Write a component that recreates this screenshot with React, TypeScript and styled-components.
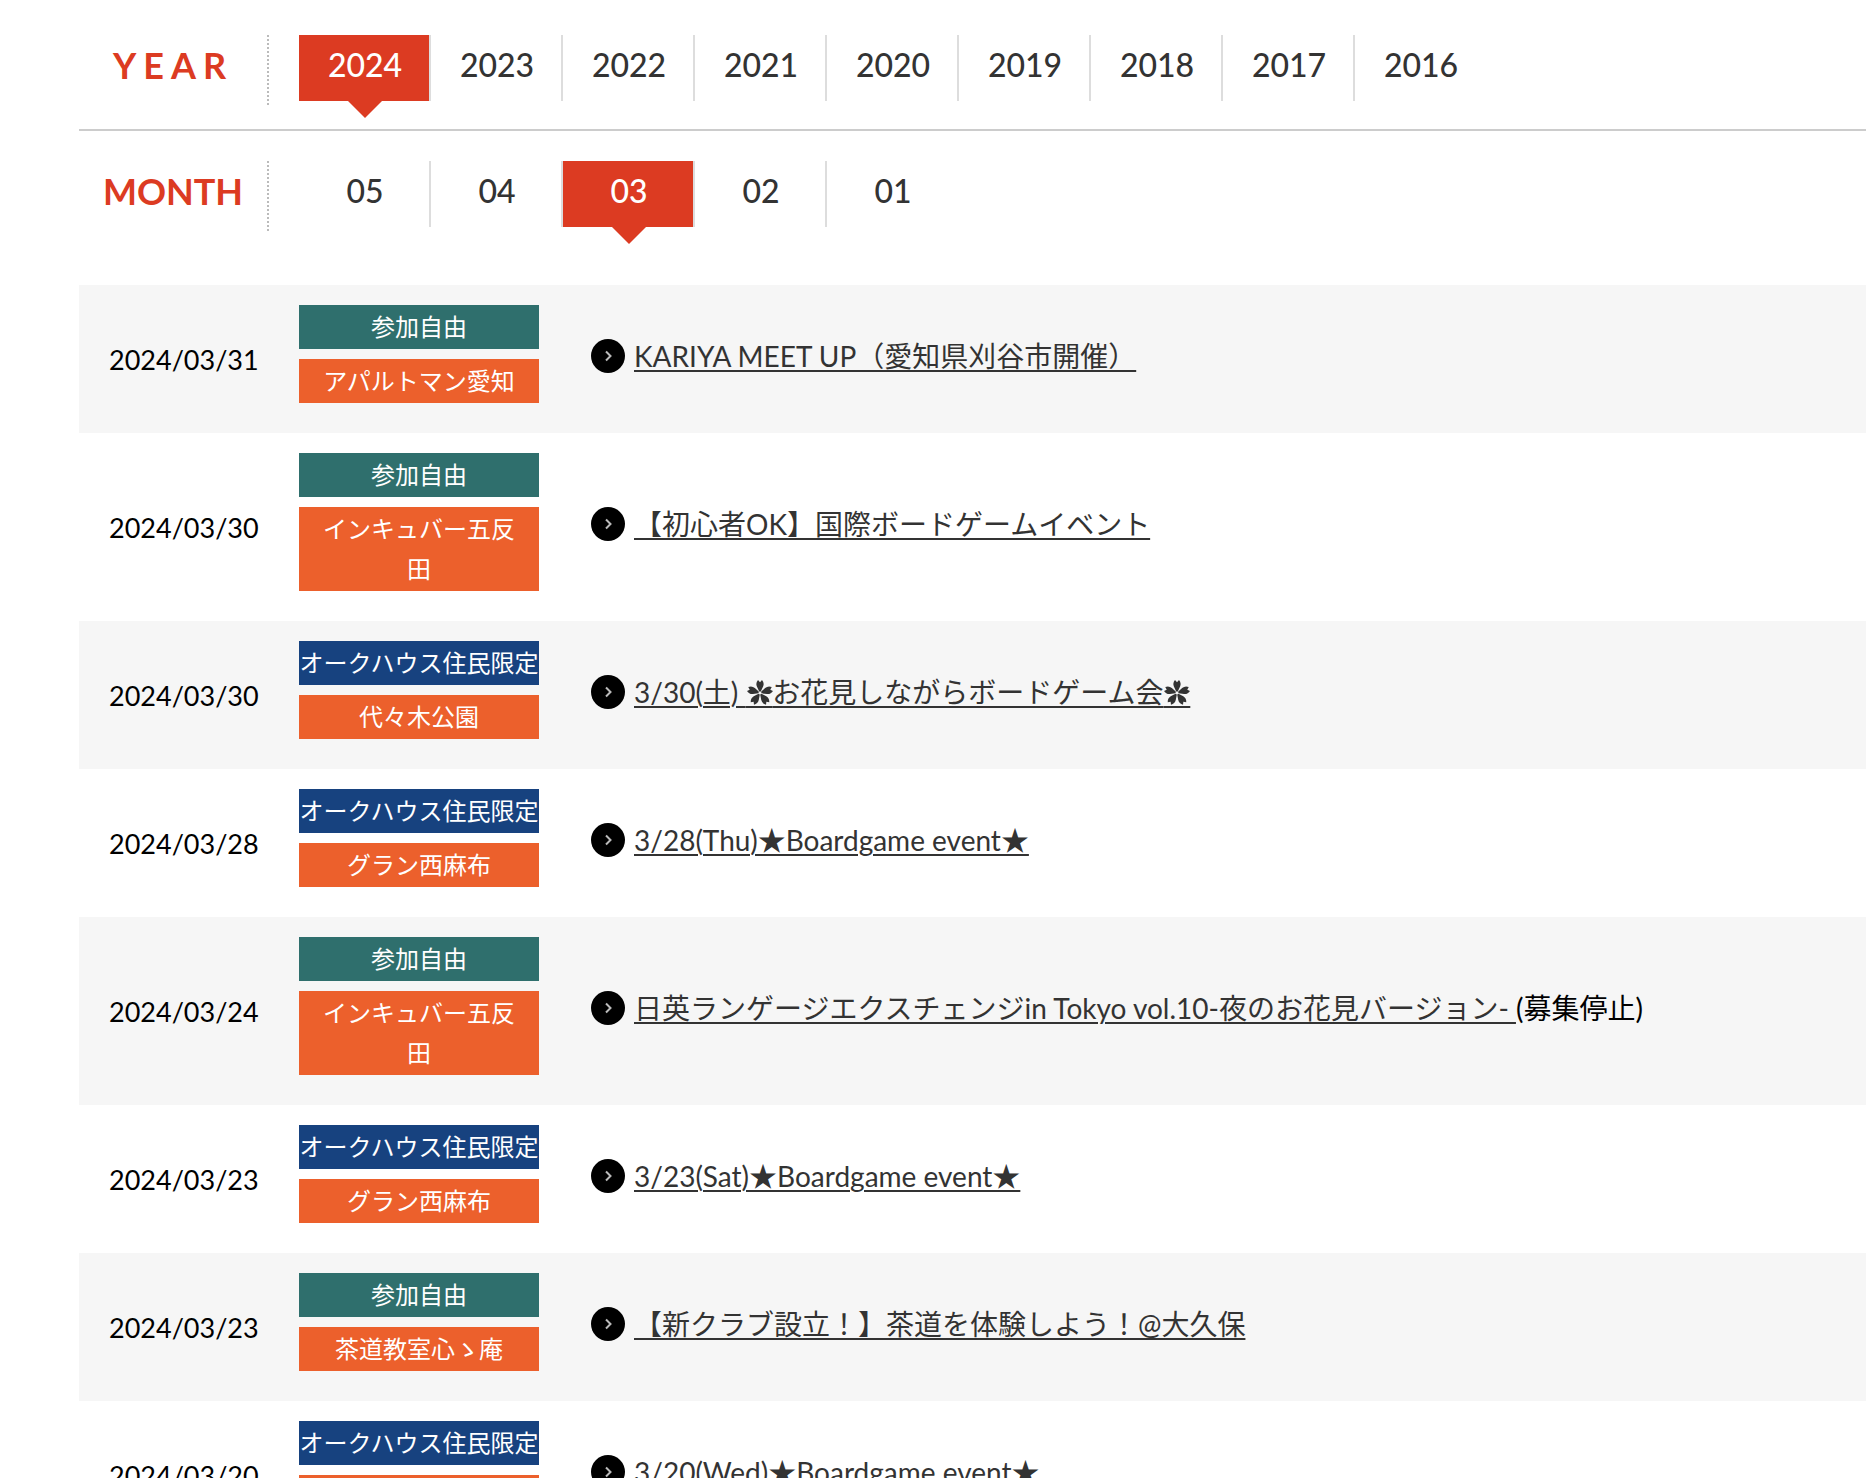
import React from "react";
import styled, { createGlobalStyle, css } from "styled-components";

const GlobalStyle = createGlobalStyle`
  *, *::before, *::after { box-sizing: border-box; }
  body {
    margin: 0;
    background: #fff;
    color: #000;
    font-family: Lato, "Noto Sans CJK JP", "DejaVu Sans", sans-serif;
    font-size: 28px;
    line-height: 40px;
    overflow-x: hidden;
  }
`;

const Page = styled.main`
  padding: 0 0 0 79px;
`;

const FilterRow = styled.nav<{ $divided?: boolean }>`
  display: flex;
  align-items: flex-start;
  gap: 30px;
  padding: ${(p) => (p.$divided ? "35px 0 24px" : "30px 0 54px")};
  border-bottom: ${(p) => (p.$divided ? "2px solid #ccc" : "0")};
`;

const FilterLabel = styled.h2<{ $wide?: boolean }>`
  flex: none;
  width: 190px;
  height: 70px;
  margin: 0;
  border-right: 2px dotted #bbb;
  color: #dc3b22;
  font-size: 36px;
  font-weight: 700;
  line-height: 60px;
  letter-spacing: ${(p) => (p.$wide ? "7px" : "normal")};
  text-align: center;
`;

const FilterList = styled.ul`
  display: flex;
  flex-wrap: wrap;
  margin: 0;
  padding: 0;
  list-style: none;
`;

const FilterItem = styled.li`
  width: 132px;
  border-right: 2px solid #ddd;

  &:last-child {
    border-right-color: transparent;
  }
`;

const FilterLink = styled.a<{ $active: boolean }>`
  position: relative;
  display: block;
  height: 66px;
  padding-left: 2px;
  color: #333;
  font-size: 32px;
  font-weight: 500;
  line-height: 60px;
  text-align: center;
  text-decoration: none;

  ${(p) =>
    p.$active &&
    css`
      background: #dc3b22;
      color: #fff;

      &::after {
        content: "";
        position: absolute;
        top: 100%;
        left: 50%;
        margin-left: -16px;
        border: 17px solid transparent;
        border-top-color: #dc3b22;
        border-bottom: 0;
      }
    `}
`;

const EventTable = styled.table`
  width: 100%;
  border-collapse: collapse;
`;

const EventRow = styled.tr`
  &:nth-child(odd) {
    background: #f6f6f6;
  }
`;

const DateCell = styled.td`
  width: 220px;
  padding: 2px 0 0 30px;
  font-size: 27px;
  white-space: nowrap;
`;

const TagCell = styled.td`
  width: 240px;
  padding: 20px 0;
`;

const TitleCell = styled.td`
  padding: 0 30px 6px 52px;
`;

const tagColors = { open: "#2f6f6d", resident: "#17427f", place: "#ec602c" };

const Tag = styled.span<{ $kind: keyof typeof tagColors }>`
  display: block;
  margin-bottom: 10px;
  padding: 2px ${(p) => (p.$kind === "place" ? "20px" : "0")};
  background: ${(p) => tagColors[p.$kind]};
  color: #fff;
  font-size: 24px;
  line-height: 40px;
  text-align: center;
`;

const Title = styled.div`
  display: flex;
  align-items: center;
  gap: 9px;
`;

const EventLink = styled.a`
  color: #333;
  text-decoration: underline;
  text-decoration-thickness: 2px;
  text-underline-offset: 3px;
`;

const Bullet = styled.svg`
  flex: none;
  width: 34px;
  height: 34px;
`;

const BlossomMark = styled.span`
  position: relative;
  color: transparent;
  font-size: 32px;
  line-height: 1;

  svg {
    position: absolute;
    top: 8px;
    left: 0;
    width: 28px;
    height: 28px;
    fill: #333;
  }
`;

type Event = {
  date: string;
  open: boolean;
  place: string;
  title: string;
  note?: string;
};

const years = ["2024", "2023", "2022", "2021", "2020", "2019", "2018", "2017", "2016"];
const months = ["05", "04", "03", "02", "01"];

const events: Event[] = [
  { date: "2024/03/31", open: true, place: "アパルトマン愛知", title: "KARIYA MEET UP（愛知県刈谷市開催）" },
  { date: "2024/03/30", open: true, place: "インキュバー五反田", title: "【初心者OK】国際ボードゲームイベント" },
  { date: "2024/03/30", open: false, place: "代々木公園", title: "3/30(土) ✲お花見しながらボードゲーム会✲" },
  { date: "2024/03/28", open: false, place: "グラン西麻布", title: "3/28(Thu)★Boardgame event★" },
  {
    date: "2024/03/24",
    open: true,
    place: "インキュバー五反田",
    title: "日英ランゲージエクスチェンジin Tokyo vol.10-夜のお花見バージョン- ",
    note: "(募集停止)",
  },
  { date: "2024/03/23", open: false, place: "グラン西麻布", title: "3/23(Sat)★Boardgame event★" },
  { date: "2024/03/23", open: true, place: "茶道教室心ゝ庵", title: "【新クラブ設立！】茶道を体験しよう！@大久保" },
  { date: "2024/03/20", open: false, place: "グラン西麻布", title: "3/20(Wed)★Boardgame event★" },
];

// Five notched petals, drawn over the ✲ character so the underline keeps running below it.
function Blossom() {
  return (
    <BlossomMark>
      ✲
      <svg viewBox="0 0 28 28" aria-hidden="true">
        {[0, 72, 144, 216, 288].map((angle) => (
          <path
            key={angle}
            transform={`rotate(${angle} 14 14)`}
            d="M13.2 12.6L10.9 7.6Q9.4 4 12 1L14 3.2L16 1Q18.6 4 17.1 7.6L14.8 12.6Z"
          />
        ))}
      </svg>
    </BlossomMark>
  );
}

function TitleText({ text }: { text: string }) {
  return (
    <>
      {text.split("✲").map((part, i) => (
        <React.Fragment key={i}>
          {i > 0 && <Blossom />}
          {part}
        </React.Fragment>
      ))}
    </>
  );
}

function Filter({ label, items, current, wide }: { label: string; items: string[]; current: string; wide?: boolean }) {
  return (
    <FilterRow $divided={wide} aria-label={label}>
      <FilterLabel $wide={wide}>{label}</FilterLabel>
      <FilterList>
        {items.map((item) => (
          <FilterItem key={item}>
            <FilterLink href={`#${item}`} $active={item === current}>
              {item}
            </FilterLink>
          </FilterItem>
        ))}
      </FilterList>
    </FilterRow>
  );
}

export default function App() {
  return (
    <Page>
      <GlobalStyle />
      <Filter label="YEAR" items={years} current="2024" wide />
      <Filter label="MONTH" items={months} current="03" />
      <EventTable>
        <tbody>
          {events.map((event, i) => (
            <EventRow key={i}>
              <DateCell>{event.date}</DateCell>
              <TagCell>
                <Tag $kind={event.open ? "open" : "resident"}>{event.open ? "参加自由" : "オークハウス住民限定"}</Tag>
                <Tag $kind="place">{event.place}</Tag>
              </TagCell>
              <TitleCell>
                <Title>
                  <Bullet viewBox="0 0 34 34" aria-hidden="true">
                    <circle cx="17" cy="17" r="17" fill="#000" />
                    <path d="M15 12.5l4.5 4.5-4.5 4.5" fill="none" stroke="#bbb" strokeWidth="2" />
                  </Bullet>
                  <span>
                    <EventLink href={`#event-${i}`}>
                      <TitleText text={event.title} />
                    </EventLink>
                    {event.note}
                  </span>
                </Title>
              </TitleCell>
            </EventRow>
          ))}
        </tbody>
      </EventTable>
    </Page>
  );
}
